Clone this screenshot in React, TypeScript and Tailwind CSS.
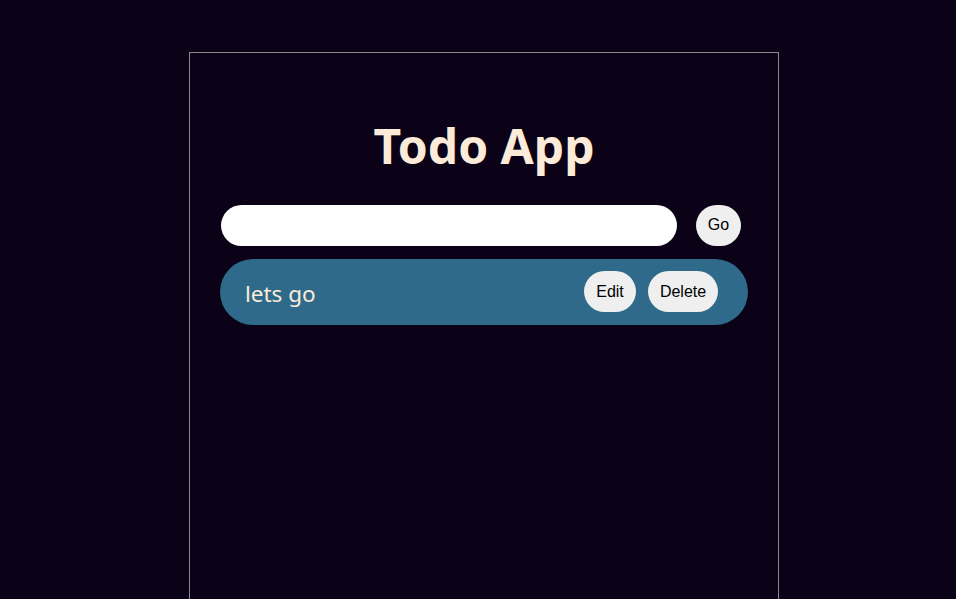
import React from "react";

export default function App() {
  return (
    <div className="h-screen bg-[#0b0217] flex justify-center pl-[12px] pt-[52px] overflow-hidden">
      <div className="w-[590px] h-[560px] shrink-0 border border-[#8a8a8a] flex flex-col items-center px-[30px]">
        <h1
          className="mt-[64px] text-[48px] font-bold leading-[1.2] text-[#fcebd8]"
          style={{ fontFamily: '"Noto Sans", "Open Sans", sans-serif' }}
        >
          Todo App
        </h1>
        <div className="w-full mt-[30px] flex items-center gap-[19px] pl-[1px]">
          <input
            type="text"
            className="w-[456px] h-[41px] rounded-full bg-white outline-none px-4"
          />
          <button
            className="w-[45px] h-[41px] rounded-full bg-[#efefef] text-black text-[16px]"
            style={{ fontFamily: '"Liberation Sans", Arial, sans-serif' }}
          >
            Go
          </button>
        </div>
        <div className="w-full mt-[13px] h-[66px] rounded-full bg-[#2f6a8b] flex items-center pl-[25px] pr-[30px]">
          <span
            className="flex-1 text-[22.5px] text-[#fcebd8] pt-[4px]"
            style={{ fontFamily: '"Noto Sans", "Open Sans", sans-serif' }}
          >
            lets go
          </span>
          <div
            className="flex items-center gap-[12px]"
            style={{ fontFamily: '"Liberation Sans", Arial, sans-serif' }}
          >
            <button className="w-[52px] h-[41px] rounded-full bg-[#efefef] text-black text-[16px]">
              Edit
            </button>
            <button className="w-[70px] h-[41px] rounded-full bg-[#efefef] text-black text-[16px]">
              Delete
            </button>
          </div>
        </div>
      </div>
    </div>
  );
}
